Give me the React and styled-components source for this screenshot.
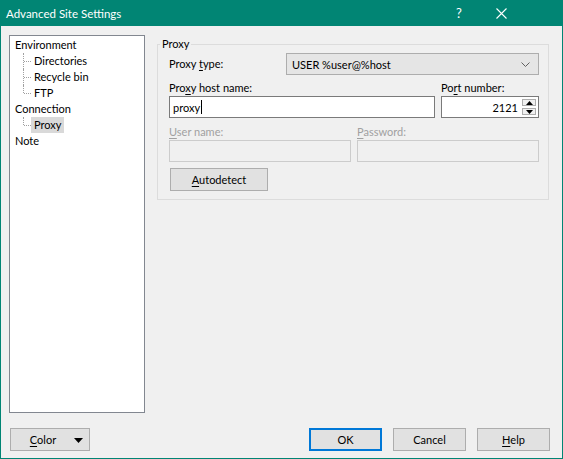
import React from 'react';
import styled, { createGlobalStyle } from 'styled-components';

const GlobalStyle = createGlobalStyle`
  html, body {
    margin: 0;
    padding: 0;
    background: #ffffff;
  }
  * {
    box-sizing: border-box;
  }
`

const Window = styled.div`
  width: 563px;
  height: 459px;
  display: flex;
  flex-direction: column;
  background: #f0f0f0;
  border: 1px solid #018574;
  border-top: none;
  font-family: 'Lato', 'Liberation Sans', sans-serif;
  font-size: 11px;
  color: #000000;
`
const TitleBar = styled.div`
  height: 26px;
  margin: 0 -1px;
  background: #018574;
  color: #ffffff;
  display: flex;
  align-items: center;
  padding: 0 41px 0 6px;
  font-size: 11.5px;
`
const Title = styled.span`
  flex: 1;
`
const TitleButton = styled.div`
  width: 42px;
  height: 26px;
  display: flex;
  align-items: center;
  justify-content: center;
  font-size: 13px;
`
const Main = styled.div`
  display: flex;
  align-items: flex-start;
  padding: 9px 0 0 8px;
  gap: 12px;
`
const Tree = styled.div`
  width: 136px;
  height: 378px;
  background: #ffffff;
  border: 1px solid #828790;
  padding: 1px 0 0 2px;
`
const TreeRow = styled.div`
  position: relative;
  height: 16px;
  display: flex;
  align-items: center;
  padding-left: ${p => (p.$child ? '19px' : '0')};

  &::before {
    content: '';
    display: ${p => (p.$child ? 'block' : 'none')};
    position: absolute;
    left: 11px;
    top: 0;
    height: ${p => (p.$last ? '8px' : '16px')};
    border-left: 1px dotted #a0a0a0;
  }
  &::after {
    content: '';
    display: ${p => (p.$child ? 'block' : 'none')};
    position: absolute;
    left: 12px;
    top: 8px;
    width: 7px;
    border-top: 1px dotted #a0a0a0;
  }
`
const TreeLabel = styled.span`
  padding: 0 3px;
  height: 16px;
  line-height: 16px;
  background: ${p => (p.$selected ? '#d9d9d9' : 'transparent')};
`
const Group = styled.fieldset`
  width: 392px;
  margin: 1px 0 0 0;
  border: 1px solid #dcdcdc;
  padding: 1px 9px 8px 11px;
  min-width: 0;
`
const Legend = styled.legend`
  margin-left: -9px;
  padding: 0 2px;
  line-height: 16px;
  height: 16px;
`
const Row = styled.div`
  display: flex;
  align-items: center;
  height: 22px;
`
const FieldGrid = styled.div`
  display: grid;
  grid-template-columns: ${p => p.$cols};
  column-gap: 6px;
  margin-top: ${p => p.$top};
`
const Label = styled.label`
  display: block;
  height: 16px;
  line-height: 16px;
  width: ${p => p.$width || 'auto'};
  color: ${p => (p.$disabled ? '#a0a0a0' : '#000000')};
`
const Key = styled.u`
  text-decoration-thickness: 1px;
  text-underline-offset: 2px;
`
const Combo = styled.div`
  flex: 1;
  height: 22px;
  background: #e5e5e5;
  border: 1px solid #adadad;
  display: flex;
  align-items: center;
  padding: 0 8px 0 5px;

  span {
    flex: 1;
  }
`
const TextBox = styled.div`
  height: 22px;
  background: ${p => (p.$disabled ? '#f0f0f0' : '#ffffff')};
  border: 1px solid ${p => (p.$disabled ? '#cccccc' : '#7a7a7a')};
  display: flex;
  align-items: center;
  padding: 0 2px 0 3px;
  justify-content: ${p => (p.$right ? 'flex-end' : 'flex-start')};
`
const Caret = styled.span`
  display: inline-block;
  width: 1px;
  height: 14px;
  background: #000000;
  margin-left: 1px;
`
const Spinner = styled.div`
  display: flex;
  flex-direction: column;
  gap: 2px;
  margin-left: 4px;
`
const SpinButton = styled.div`
  width: 14px;
  height: 7px;
  border: 1px solid #adadad;
  background: #f0f0f0;
  display: flex;
  align-items: center;
  justify-content: center;
`
const Button = styled.div`
  width: ${p => p.$width || '73px'};
  height: 23px;
  background: #e1e1e1;
  border: ${p => (p.$default ? '2px solid #0078d7' : '1px solid #adadad')};
  display: flex;
  align-items: center;
  justify-content: center;
  margin-top: ${p => p.$top || '0'};
  margin-left: ${p => p.$left || '0'};
  position: relative;
`
const Footer = styled.div`
  display: flex;
  align-items: center;
  margin-top: 15px;
  padding: 0 12px 0 9px;
`
const Spacer = styled.div`
  flex: 1;
`
const ButtonGroup = styled.div`
  display: flex;
  gap: 11px;
`
const ColorText = styled.span`
  margin-left: -14px;
`
const DropArrow = styled.svg`
  position: absolute;
  right: 6px;
  top: 9px;
`

const TriUp = () => (
  <svg width="7" height="4" viewBox="0 0 7 4"><polygon points="0,4 7,4 3.5,0" fill="#000" /></svg>
)
const TriDown = () => (
  <svg width="7" height="4" viewBox="0 0 7 4"><polygon points="0,0 7,0 3.5,4" fill="#000" /></svg>
)

function TreeView() {
  return (
    <Tree>
      <TreeRow><TreeLabel>Environment</TreeLabel></TreeRow>
      <TreeRow $child><TreeLabel>Directories</TreeLabel></TreeRow>
      <TreeRow $child><TreeLabel>Recycle bin</TreeLabel></TreeRow>
      <TreeRow $child $last><TreeLabel>FTP</TreeLabel></TreeRow>
      <TreeRow><TreeLabel>Connection</TreeLabel></TreeRow>
      <TreeRow $child $last><TreeLabel $selected>Proxy</TreeLabel></TreeRow>
      <TreeRow><TreeLabel>Note</TreeLabel></TreeRow>
    </Tree>
  )
}

function ProxyGroup() {
  return (
    <Group>
      <Legend>Proxy</Legend>
      <Row>
        <Label $width="117px">Proxy <Key>t</Key>ype:</Label>
        <Combo>
          <span>USER %user@%host</span>
          <svg width="9" height="5" viewBox="0 0 9 5">
            <polyline points="0.5,0.5 4.5,4.5 8.5,0.5" fill="none" stroke="#606060" strokeWidth="1" />
          </svg>
        </Combo>
      </Row>
      <FieldGrid $cols="266px 98px" $top="5px">
        <Label>Pro<Key>x</Key>y host name:</Label>
        <Label>Po<Key>r</Key>t number:</Label>
        <TextBox>proxy<Caret /></TextBox>
        <TextBox $right>
          2121
          <Spinner>
            <SpinButton><TriUp /></SpinButton>
            <SpinButton><TriDown /></SpinButton>
          </Spinner>
        </TextBox>
      </FieldGrid>
      <FieldGrid $cols="182px 182px" $top="6px">
        <Label $disabled><Key>U</Key>ser name:</Label>
        <Label $disabled><Key>P</Key>assword:</Label>
        <TextBox $disabled />
        <TextBox $disabled />
      </FieldGrid>
      <Button $width="98px" $top="6px" $left="1px"><span><Key>A</Key>utodetect</span></Button>
    </Group>
  )
}

export default function App() {
  return (
    <>
      <GlobalStyle />
      <Window>
        <TitleBar>
          <Title>Advanced Site Settings</Title>
          <TitleButton>?</TitleButton>
          <TitleButton>
            <svg width="11" height="11" viewBox="0 0 11 11">
              <path d="M0.5 0.5 L10.5 10.5 M10.5 0.5 L0.5 10.5" stroke="#fff" strokeWidth="1.1" />
            </svg>
          </TitleButton>
        </TitleBar>
        <Main>
          <TreeView />
          <ProxyGroup />
        </Main>
        <Footer>
          <Button $width="80px">
            <ColorText><Key>C</Key>olor</ColorText>
            <DropArrow width="9" height="5" viewBox="0 0 9 5">
              <polygon points="0,0 9,0 4.5,5" fill="#000" />
            </DropArrow>
          </Button>
          <Spacer />
          <ButtonGroup>
            <Button $default>OK</Button>
            <Button>Cancel</Button>
            <Button><span><Key>H</Key>elp</span></Button>
          </ButtonGroup>
        </Footer>
      </Window>
    </>
  );
}
